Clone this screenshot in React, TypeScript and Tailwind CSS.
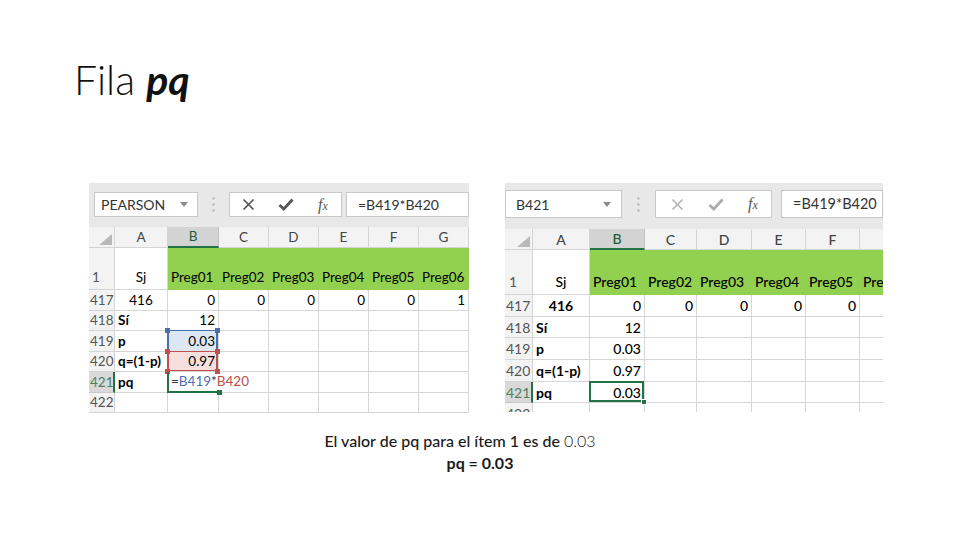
import React from "react";

function Tri() {
  return (
    <svg width="8" height="5" viewBox="0 0 8 5">
      <path d="M0 0H8L4 5Z" fill="#8c8c8c" />
    </svg>
  );
}

function Dots() {
  return (
    <svg width="3" height="15" viewBox="0 0 3 15">
      <circle cx="1.5" cy="1.5" r="1.2" fill="#b9b9b9" />
      <circle cx="1.5" cy="7.5" r="1.2" fill="#b9b9b9" />
      <circle cx="1.5" cy="13.5" r="1.2" fill="#b9b9b9" />
    </svg>
  );
}

function XIco({ color }: { color: string }) {
  return (
    <svg width="13" height="13" viewBox="0 0 13 13">
      <path d="M1.5 1.5L11.5 11.5M11.5 1.5L1.5 11.5" stroke={color} strokeWidth="1.7" />
    </svg>
  );
}

function CheckIco({ color }: { color: string }) {
  return (
    <svg width="16" height="13" viewBox="0 0 16 13">
      <path d="M1.5 7L5.8 11L14.5 1.5" stroke={color} strokeWidth="2.8" fill="none" />
    </svg>
  );
}

function Fx() {
  return (
    <span className="font-['Liberation_Serif',serif] italic text-[16px] leading-none text-[#555]">
      f<span className="text-[12px]">x</span>
    </span>
  );
}

function Corner() {
  return (
    <svg width="13" height="11" viewBox="0 0 13 11">
      <path d="M13 0V11H0Z" fill="#b9b9b9" />
    </svg>
  );
}

const HD = "flex items-center justify-center bg-[#f3f3f3] border-r border-b border-[#d4d4d4] text-[#444]";
const HDSEL = "flex items-center justify-center bg-[#d3d3d3] border-r border-[#c0c0c0] border-b-2 border-b-[#217346] text-[#1f5d3a]";
const RH = "flex items-center pl-[1px] bg-[#f3f3f3] border-r border-b border-[#d4d4d4] text-[#555]";
const RHSEL = "flex items-center pl-[1px] bg-[#d9d9d9] border-b border-[#c8c8c8] border-r-2 border-r-[#217346] text-[#4f7f60]";
const CL = "flex items-center px-[3px] whitespace-nowrap border-r border-b border-[#d6d6d6]";
const CR = "flex items-center justify-end px-[3px] whitespace-nowrap border-r border-b border-[#d6d6d6]";
const CC = "flex items-center justify-center whitespace-nowrap border-r border-b border-[#d6d6d6]";
const GRN = "flex items-end pb-[2px] px-[3px] whitespace-nowrap bg-[#92d050] border-b border-[#92d050]";

function LeftSheet() {
  return (
    <div className="w-[380px] h-[231px] overflow-hidden flex flex-col bg-white shrink-0 text-[13.5px] text-black">
      <div className="h-[44px] shrink-0 bg-[#e8e8e8] flex items-start pt-[9px] pl-[5px]">
        <div className="w-[104px] h-[25px] bg-white border border-[#c8c8c8] flex items-center justify-between pl-[6px] pr-[9px] text-[#333] text-[14px]">
          <span>PEARSON</span>
          <Tri />
        </div>
        <div className="w-[31px] h-[25px] flex items-center justify-center">
          <Dots />
        </div>
        <div className="w-[113px] h-[25px] bg-white border border-[#c8c8c8] flex items-center">
          <div className="w-[38px] flex justify-center"><XIco color="#555" /></div>
          <div className="w-[38px] flex justify-center"><CheckIco color="#555" /></div>
          <div className="w-[37px] flex justify-center"><Fx /></div>
        </div>
        <div className="ml-[4px] flex-1 h-[25px] bg-white border border-[#c8c8c8] flex items-center pl-[11px] text-[#333] text-[14px]">
          =B419*B420
        </div>
      </div>
      <div className="grid grid-cols-[26px_53px_51px_50px_50px_50px_50px_50px] grid-rows-[21px_42px_repeat(6,20.5px)]">
        <div className="flex items-end justify-end pr-[2px] pb-[2px] bg-[#f3f3f3] border-r border-b border-[#d4d4d4]"><Corner /></div>
        <div className={HD}>A</div>
        <div className={HDSEL}>B</div>
        <div className={HD}>C</div>
        <div className={HD}>D</div>
        <div className={HD}>E</div>
        <div className={HD}>F</div>
        <div className={HD}>G</div>

        <div className="flex items-end pb-[2px] pl-[3px] bg-[#f3f3f3] border-r border-b border-[#d4d4d4] text-[#555]">1</div>
        <div className="flex items-end justify-center pb-[2px] border-r border-b border-[#d6d6d6]">Sj</div>
        <div className={GRN}>Preg01</div>
        <div className={GRN}>Preg02</div>
        <div className={GRN}>Preg03</div>
        <div className={GRN}>Preg04</div>
        <div className={GRN}>Preg05</div>
        <div className={GRN}>Preg06</div>

        <div className={RH}>417</div>
        <div className={CC}>416</div>
        <div className={CR}>0</div>
        <div className={CR}>0</div>
        <div className={CR}>0</div>
        <div className={CR}>0</div>
        <div className={CR}>0</div>
        <div className={CR}>1</div>

        <div className={RH}>418</div>
        <div className={CL + " font-bold"}>Sí</div>
        <div className={CR}>12</div>
        <div className={CR}></div>
        <div className={CR}></div>
        <div className={CR}></div>
        <div className={CR}></div>
        <div className={CR}></div>

        <div className={RH}>419</div>
        <div className={CL + " font-bold"}>p</div>
        <div className={CR + " relative bg-[#dde7f3]"}>
          <span className="relative z-10">0.03</span>
          <div className="absolute -top-[1px] -left-[1px] right-0 bottom-0 border-x-2 border-t border-[#4a6fae]" />
          <div className="absolute -top-[3px] -left-[3px] w-[5px] h-[5px] bg-[#4a6fae]" />
          <div className="absolute -top-[3px] -right-[2px] w-[5px] h-[5px] bg-[#4a6fae]" />
        </div>
        <div className={CR}></div>
        <div className={CR}></div>
        <div className={CR}></div>
        <div className={CR}></div>
        <div className={CR}></div>

        <div className={RH}>420</div>
        <div className={CL + " font-bold"}>q=(1-p)</div>
        <div className={CR + " relative bg-[#f6e0df]"}>
          <span className="relative z-10">0.97</span>
          <div className="absolute -top-[1px] -left-[1px] right-0 bottom-0 border-x-2 border-y border-[#c0504d]" />
          <div className="absolute -top-[3px] -left-[3px] w-[5px] h-[5px] bg-[#c0504d]" />
          <div className="absolute -top-[3px] -right-[2px] w-[5px] h-[5px] bg-[#c0504d]" />
          <div className="absolute -bottom-[3px] -left-[3px] w-[5px] h-[5px] bg-[#c0504d]" />
          <div className="absolute -bottom-[3px] -right-[2px] w-[5px] h-[5px] bg-[#c0504d]" />
        </div>
        <div className={CR}></div>
        <div className={CR}></div>
        <div className={CR}></div>
        <div className={CR}></div>
        <div className={CR}></div>

        <div className={RHSEL}>421</div>
        <div className={CL + " font-bold"}>pq</div>
        <div className="relative flex items-center pl-[2px] whitespace-nowrap border-b-2 border-b-[#217346] border-l-2 border-l-[#217346] -ml-[1px]">
          <span className="relative z-10 text-[#333]">=<span className="text-[#4a72b4]">B419</span>*<span className="text-[#c0504d]">B420</span></span>
          <div className="absolute -bottom-[4px] -right-[3px] w-[5px] h-[5px] bg-[#217346]" />
        </div>
        <div className={CR}></div>
        <div className={CR}></div>
        <div className={CR}></div>
        <div className={CR}></div>
        <div className={CR}></div>

        <div className={RH}>422</div>
        <div className={CR}></div>
        <div className={CR}></div>
        <div className={CR}></div>
        <div className={CR}></div>
        <div className={CR}></div>
        <div className={CR}></div>
        <div className={CR}></div>
      </div>
    </div>
  );
}

function RightSheet() {
  return (
    <div className="w-[378px] h-[229px] overflow-hidden flex flex-col bg-white shrink-0 text-[14px] text-black font-medium">
      <div className="h-[46px] shrink-0 bg-[#e8e8e8] flex items-start pt-[7px] font-normal">
        <div className="w-[117px] h-[28px] bg-white border border-[#c8c8c8] flex items-center justify-between pl-[10px] pr-[10px] text-[#333] text-[14px]">
          <span>B421</span>
          <Tri />
        </div>
        <div className="w-[33px] h-[28px] flex items-center justify-center">
          <Dots />
        </div>
        <div className="w-[117px] h-[28px] bg-white border border-[#c8c8c8] flex items-center pl-[3px]">
          <div className="w-[39px] flex justify-center"><XIco color="#b4b4b4" /></div>
          <div className="w-[39px] flex justify-center"><CheckIco color="#ababab" /></div>
          <div className="w-[37px] flex justify-center"><Fx /></div>
        </div>
        <div className="ml-[9px] flex-1 h-[28px] bg-white border border-[#c8c8c8] flex items-center pl-[11px] text-[#333] text-[14.5px]">
          =B419*B420
        </div>
      </div>
      <div className="grid grid-cols-[28px_57px_55px_52px_55px_54px_54px_54px] grid-rows-[21px_45px_repeat(6,21.7px)]">
        <div className="flex items-end justify-end pr-[2px] pb-[2px] bg-[#f3f3f3] border-r border-b border-[#d4d4d4]"><Corner /></div>
        <div className={HD}>A</div>
        <div className={HDSEL}>B</div>
        <div className={HD}>C</div>
        <div className={HD}>D</div>
        <div className={HD}>E</div>
        <div className={HD}>F</div>
        <div className={HD}></div>

        <div className="flex items-end pb-[2px] pl-[4px] bg-[#f3f3f3] border-r border-b border-[#d4d4d4] text-[#555] font-normal">1</div>
        <div className="flex items-end justify-center pb-[2px] border-r border-b border-[#d6d6d6]">Sj</div>
        <div className={GRN}>Preg01</div>
        <div className={GRN}>Preg02</div>
        <div className={GRN}>Preg03</div>
        <div className={GRN}>Preg04</div>
        <div className={GRN}>Preg05</div>
        <div className={GRN}>Preg06</div>

        <div className={RH + " font-normal"}>417</div>
        <div className={CC + " font-bold"}>416</div>
        <div className={CR}>0</div>
        <div className={CR}>0</div>
        <div className={CR}>0</div>
        <div className={CR}>0</div>
        <div className={CR}>0</div>
        <div className={CR}></div>

        <div className={RH + " font-normal"}>418</div>
        <div className={CL + " font-bold"}>Sí</div>
        <div className={CR}>12</div>
        <div className={CR}></div>
        <div className={CR}></div>
        <div className={CR}></div>
        <div className={CR}></div>
        <div className={CR}></div>

        <div className={RH + " font-normal"}>419</div>
        <div className={CL + " font-bold"}>p</div>
        <div className={CR}>0.03</div>
        <div className={CR}></div>
        <div className={CR}></div>
        <div className={CR}></div>
        <div className={CR}></div>
        <div className={CR}></div>

        <div className={RH + " font-normal"}>420</div>
        <div className={CL + " font-bold"}>q=(1-p)</div>
        <div className={CR}>0.97</div>
        <div className={CR}></div>
        <div className={CR}></div>
        <div className={CR}></div>
        <div className={CR}></div>
        <div className={CR}></div>

        <div className={RHSEL + " font-normal"}>421</div>
        <div className={CL + " font-bold"}>pq</div>
        <div className={CR + " relative"}>
          <span className="relative z-10">0.03</span>
          <div className="absolute -top-[1px] -left-[1px] right-0 bottom-0 border-2 border-[#217346]" />
          <div className="absolute -bottom-[3px] -right-[3px] w-[6px] h-[6px] bg-[#217346] border border-white" />
        </div>
        <div className={CR}></div>
        <div className={CR}></div>
        <div className={CR}></div>
        <div className={CR}></div>
        <div className={CR}></div>

        <div className={RH + " font-normal"}>422</div>
        <div className={CR}></div>
        <div className={CR}></div>
        <div className={CR}></div>
        <div className={CR}></div>
        <div className={CR}></div>
        <div className={CR}></div>
        <div className={CR}></div>
      </div>
    </div>
  );
}

export default function App() {
  return (
    <div className="w-[960px] h-[540px] bg-white overflow-hidden font-['Lato',sans-serif] text-[#111]">
      <div className="pt-[59px] pl-[74px] h-[183px]">
        <h1 className="text-[41px] leading-none font-light text-[#111]">
          Fila <span className="font-bold italic">pq</span>
        </h1>
      </div>
      <div className="flex items-start pl-[89px] gap-[36px]">
        <LeftSheet />
        <RightSheet />
      </div>
      <div className="mt-[16px] flex flex-col items-center text-[16px] leading-[22px] text-[#1a1a1a]">
        <div className="pr-[40px] font-medium">
          El valor de pq para el ítem 1 es de <span className="font-light">0.03</span>
        </div>
        <div className="font-bold">pq = 0.03</div>
      </div>
    </div>
  );
}
